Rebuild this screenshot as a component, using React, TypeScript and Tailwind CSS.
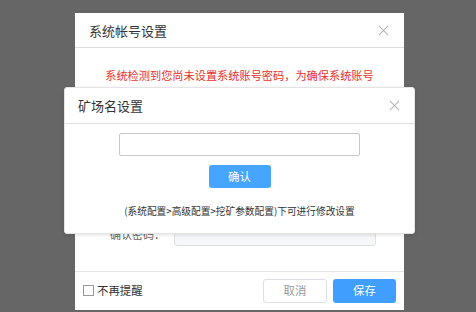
import React from "react";

const font = { fontFamily: '"Noto Sans CJK SC", "Noto Sans", sans-serif' };

function CloseX({ className }: { className?: string }) {
  return (
    <svg viewBox="0 0 12 12" className={className} fill="none" stroke="currentColor" strokeWidth="1.1">
      <path d="M1 1L11 11M11 1L1 11" />
    </svg>
  );
}

export default function App() {
  return (
    <div className="relative w-[476px] h-[312px] overflow-hidden bg-[#666666]" style={font}>
      {/* Outer dialog */}
      <div className="absolute left-[75px] top-[13px] w-[329px] h-[297px] bg-white flex flex-col">
        <div className="h-[35px] shrink-0 flex items-center justify-between px-[14px] border-b border-[#dcdcdc]">
          <span className="text-[13px] text-[#333] leading-none">系统帐号设置</span>
          <CloseX className="w-[11px] h-[11px] text-[#b5b5b5] mr-[1px]" />
        </div>
        <div className="flex-1 flex flex-col">
          <p className="mt-[20px] text-center text-[11.2px] leading-[14px] text-[#e8312c]">
            系统检测到您尚未设置系统账号密码，为确保系统账号
          </p>
          <div className="mt-[140px] flex items-center pl-[35px]">
            <span className="w-[64px] text-[11px] text-[#666]">确认密码：</span>
            <div className="w-[202px] h-[24px] border border-[#e0e0e0] rounded-[3px] bg-[#f5f7fa]" />
          </div>
        </div>
        <div className="h-[39px] shrink-0 border-t border-[#e6e6e6] flex items-center justify-between pl-[8px] pr-[8px]">
          <label className="flex items-center gap-[3px]">
            <span className="w-[11px] h-[11px] border border-[#999] bg-white" />
            <span className="text-[11.4px] text-[#333]">不再提醒</span>
          </label>
          <div className="flex items-center gap-[6px]">
            <button className="w-[64px] h-[24px] border border-[#dcdfe6] rounded-[3px] bg-white text-[11.4px] text-[#999]">取消</button>
            <button className="w-[63px] h-[24px] rounded-[3px] bg-[#409eff] text-[11.4px] text-white">保存</button>
          </div>
        </div>
      </div>

      {/* Inner dialog */}
      <div className="absolute left-[64px] top-[87px] w-[351px] h-[147px] bg-white rounded-[3px] border border-[#e4e4e4] shadow-[0_1px_4px_rgba(0,0,0,0.12)] flex flex-col">
        <div className="h-[36px] shrink-0 flex items-center justify-between px-[13px] border-b border-[#e0e0e0]">
          <span className="text-[13px] text-[#333] leading-none">矿场名设置</span>
          <CloseX className="w-[11px] h-[11px] text-[#b5b5b5] mr-[1px]" />
        </div>
        <div className="flex flex-col items-center pt-[9px]">
          <div className="w-[241px] h-[23px] border border-[#c8c8c8] rounded-[2px] bg-white" />
          <button className="mt-[9px] w-[62px] h-[23px] rounded-[3px] bg-[#46a6ff] text-[11.4px] text-white">确认</button>
          <p className="mt-[19px] text-[9.7px] text-[#333] leading-none">(系统配置&gt;高级配置&gt;挖矿参数配置)下可进行修改设置</p>
        </div>
      </div>
    </div>
  );
}
